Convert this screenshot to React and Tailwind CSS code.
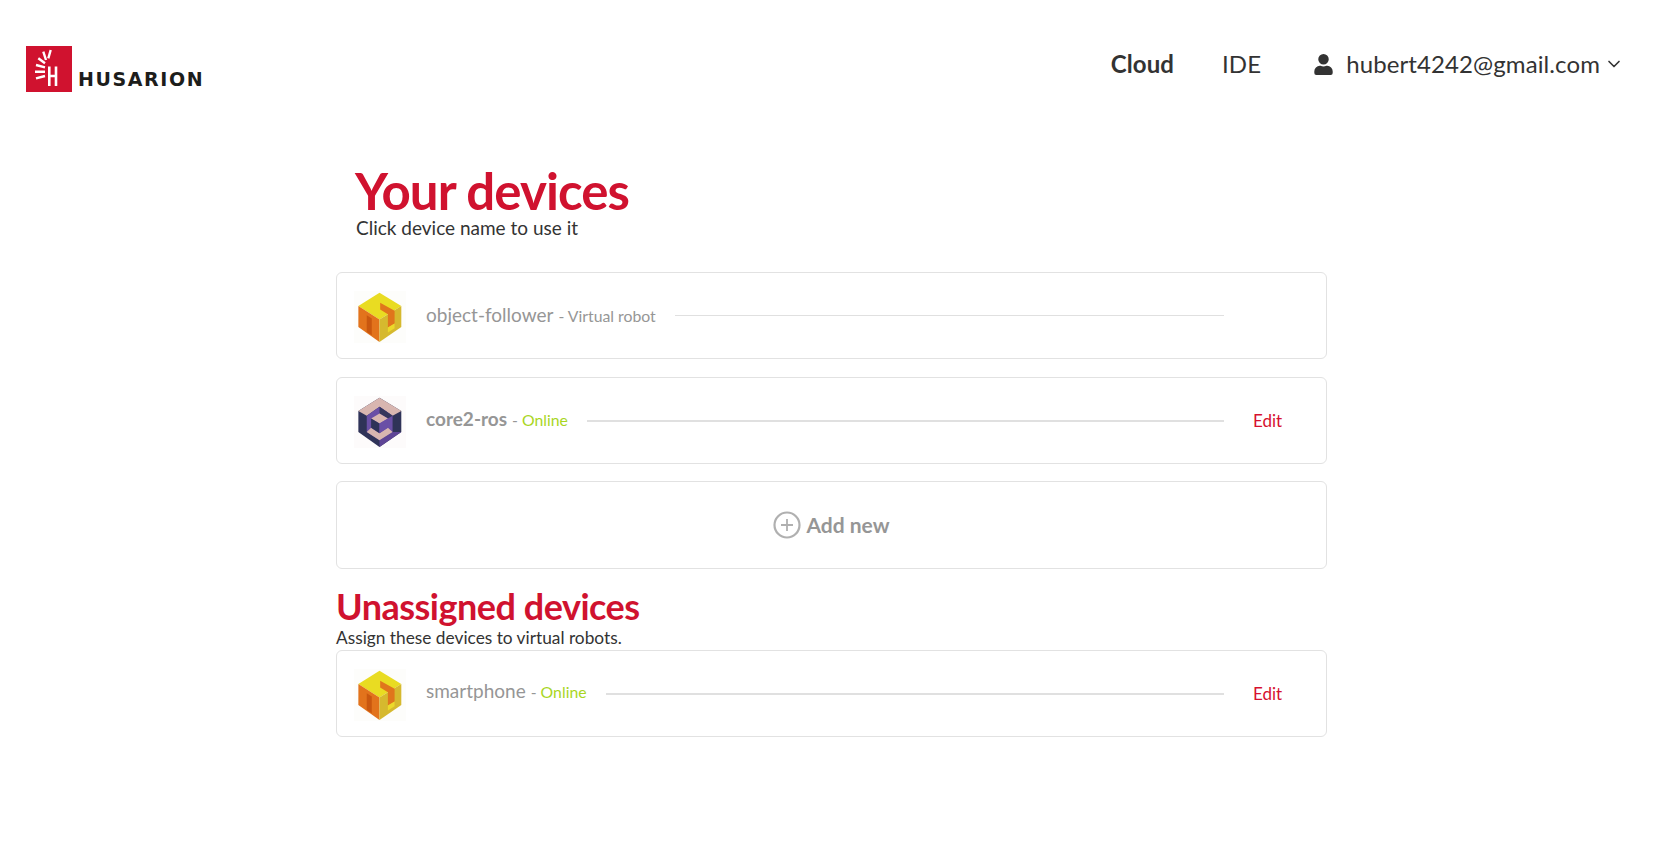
import React from 'react';
import { ChevronDown } from 'lucide-react';

const YellowCube = () => (
  <svg viewBox="57 63 155 155" className="w-[52px] h-[52px] shrink-0 mt-[2px] bg-[#fdfdfb]">
    <polygon points="133,68 198,108 133,148 70,108" fill="#e9dc22" />
    <polygon points="70,108 133,148 133,215 70,170" fill="#e2731c" />
    <polygon points="133,148 198,108 198,170 133,215" fill="#d6b92e" />
    <polygon points="95,135 110,145 110,195 95,185" fill="#c9570f" />
    <polygon points="135,98 178,122 178,160 158,172 158,132 135,118" fill="#e0761c" />
    <polygon points="158,172 178,160 178,174 158,187" fill="#ecd92a" />
  </svg>
);

const PurpleCube = () => (
  <svg viewBox="57 63 155 155" className="w-[52px] h-[52px] shrink-0 mt-[2px] bg-[#fdfbfb]">
    <polygon points="133,68 198,108 198,170 133,215 70,170 70,108" fill="#2f3358" />
    <polygon points="133,68 198,108 172,122 133,95 95,122 70,108" fill="#d8b6b0" />
    <polygon points="198,170 133,215 133,195 172,170" fill="#5f4596" />
    <polygon points="133,95 172,122 172,170 133,195 95,170 95,122" fill="#6a4fa6" />
    <polygon points="133,95 172,122 158,130 133,115" fill="#34375c" />
    <polygon points="108,158 133,174 158,158 172,170 133,195 95,170" fill="#d8b6b0" />
    <polygon points="133,115 158,130 133,145 108,130" fill="#d8b6b0" />
    <polygon points="108,130 133,145 133,174 108,158" fill="#2f3358" />
    <polygon points="133,145 158,130 158,158 133,174" fill="#6a4fa6" />
  </svg>
);

const Logo = () => (
  <div className="flex items-end">
    <div className="w-[46px] h-[46px] bg-[#d0122f]">
      <svg viewBox="0 0 46 46" className="w-[46px] h-[46px]" fill="none" stroke="#fff">
        <path d="M24.7 4 L22.3 12.3 M17.3 5.7 L20 14 M12.3 12.3 L19 17.3 M10 19 L19 21.3 M9 25.7 H19 M10 32.3 L19 30" strokeWidth="2.4" />
        <path d="M23.3 20.5 V40 M30 20.5 V40 M23.3 30 H30" strokeWidth="2.6" />
      </svg>
    </div>
    <span className="ml-[6px] mb-[1px] text-[19px] leading-[24px] font-bold tracking-[1.6px] text-[#1d1d1b] font-['DejaVu_Sans',sans-serif]">HUSARION</span>
  </div>
);

const Device = ({ icon, name, bold, note, noteColor, edit, thin, textClass }) => (
  <div className="h-[87px] border border-[#e2e2e2] rounded-[6px] flex items-center pl-[17px] bg-white">
    {icon}
    <div className={`ml-[20px] flex items-baseline whitespace-nowrap ${textClass || ''}`}>
      <span className={bold ? 'text-[19px] font-bold text-[#969696]' : 'text-[19px] text-[#969696]'}>{name}</span>
      <span className={`ml-[5px] text-[15.8px] ${noteColor}`}>
        <span className="text-[#969696]">- </span>{note}
      </span>
    </div>
    <div className={thin ? 'flex-1 ml-[19px] h-[1px] bg-[#e0e0e0]' : 'flex-1 ml-[19px] h-[2px] bg-[#e0e0e0]'} />
    <div className="w-[102px] shrink-0 pl-[29px] text-[17px] text-[#d6112f]">{edit ? 'Edit' : ''}</div>
  </div>
);

export default function App() {
  return (
    <div className="min-h-[842px] bg-white font-['Lato',sans-serif] text-[#333333]">
      <header className="flex items-start justify-between pl-[26px] pr-[40px] pt-[46px] h-[150px]">
        <Logo />
        <nav className="flex items-center text-[24px] leading-[36px] tracking-[0.1px]">
          <span className="font-bold">Cloud</span>
          <span className="ml-[48px]">IDE</span>
          <svg viewBox="0 0 448 512" className="ml-[53px] w-[19px] h-[21px]" fill="#333">
            <path d="M224 256a128 128 0 1 0 0-256 128 128 0 0 0 0 256zm89.6 32h-16.7a174 174 0 0 1-145.8 0h-16.7A134.4 134.4 0 0 0 0 422.4V464a48 48 0 0 0 48 48h352a48 48 0 0 0 48-48v-41.6A134.4 134.4 0 0 0 313.6 288z" />
          </svg>
          <span className="ml-[13px]">hubert4242@gmail.com</span>
          <ChevronDown className="ml-[4px] w-[20px] h-[20px]" strokeWidth={2} />
        </nav>
      </header>
      <main className="w-[991px] ml-[336px]">
        <div className="pl-[20px]">
          <h1 className="text-[51px] leading-[52px] font-bold text-[#d0122f] tracking-[-0.9px] mt-[15px] -ml-[1px]">Your devices</h1>
          <p className="text-[19px] leading-[22px]">Click device name to use it</p>
        </div>
        <div className="mt-[33px] flex flex-col gap-[18px]">
          <Device icon={<YellowCube />} name="object-follower" note="Virtual robot" noteColor="text-[#969696]" thin />
          <Device icon={<PurpleCube />} name="core2-ros" bold note="Online" noteColor="text-[#a9d61f]" edit textClass="-mt-[2px]" />
          <div className="h-[88px] -mt-[1px] border border-[#e2e2e2] rounded-[6px] flex items-center justify-center text-[#969696]">
            <svg viewBox="0 0 28 28" className="w-[28px] h-[28px]" fill="none" stroke="#b0b0b0">
              <circle cx="14" cy="14" r="12.5" strokeWidth="2.2" />
              <path d="M14 8 V20 M8 14 H20" strokeWidth="1.8" />
            </svg>
            <span className="ml-[5px] text-[21px] font-bold">Add new</span>
          </div>
        </div>
        <h2 className="text-[36px] leading-[44px] font-bold text-[#d0122f] tracking-[-0.5px] mt-[15px]">Unassigned devices</h2>
        <p className="text-[17.3px] leading-[20px]">Assign these devices to virtual robots.</p>
        <div className="mt-[2px]">
          <Device icon={<YellowCube />} name="smartphone" note="Online" noteColor="text-[#a9d61f]" edit textClass="-mt-[4px]" />
        </div>
      </main>
    </div>
  );
}
